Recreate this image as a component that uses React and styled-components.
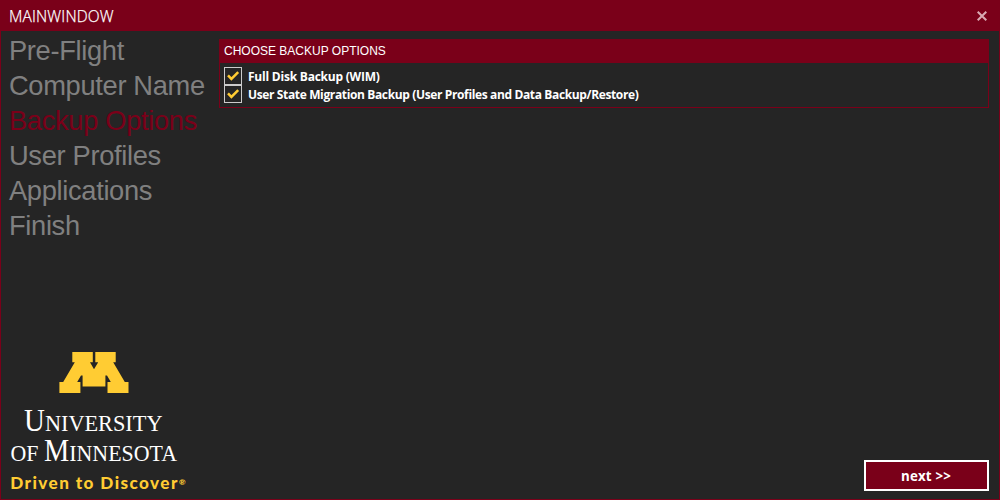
import React from 'react';
import styled, { createGlobalStyle } from 'styled-components';

const maroon = '#7a0019';
const gold = '#ffcc33';

const Global = createGlobalStyle`
  html, body { margin: 0; padding: 0; background: #252525; }
  *, *::before, *::after { box-sizing: border-box; }
`;

const Window = styled.div`
  width: 1000px;
  height: 500px;
  display: flex;
  flex-direction: column;
  background: #252525;
  border: 1px solid ${maroon};
  border-top: 0;
  color: #fff;
  overflow: hidden;
  font-family: 'Liberation Sans', Arial, sans-serif;
`;

const TitleBar = styled.header`
  height: 31px;
  flex: none;
  display: flex;
  align-items: center;
  justify-content: space-between;
  margin: 0 -1px;
  padding: 1px 13px 0 9px;
  background: ${maroon};
`;

const Title = styled.span`
  font: 300 15.5px/20px 'Open Sans', 'Noto Sans', sans-serif;
  letter-spacing: 0.15px;
  -webkit-text-stroke: 0.25px #fff;
`;

const CloseButton = styled.button`
  display: flex;
  padding: 0;
  border: 0;
  background: none;
`;

const Body = styled.div`
  flex: 1;
  min-height: 0;
  display: flex;
`;

const Sidebar = styled.aside`
  width: 218px;
  flex: none;
  display: flex;
  flex-direction: column;
  justify-content: space-between;
`;

const Nav = styled.nav`
  display: flex;
  flex-direction: column;
  padding: 2px 0 0 8px;
`;

const Step = styled.span`
  font-size: 27.3px;
  line-height: 35px;
  letter-spacing: -0.34px;
  white-space: nowrap;
  color: ${(p) => (p.$active ? maroon : '#808080')};
`;

const Logo = styled.svg`
  display: block;
  width: 200px;
  height: 160px;
  margin-left: -1px;
  margin-bottom: -1px;
`;

const Main = styled.main`
  flex: 1;
  display: flex;
  flex-direction: column;
  justify-content: space-between;
  padding: 8px 10px 8px 0;
`;

const Group = styled.section`
  height: 69px;
  border: 1px solid ${maroon};
`;

const GroupHeader = styled.h2`
  height: 23px;
  margin: 0;
  padding: 0 4px;
  background: ${maroon};
  font-size: 12px;
  font-weight: 400;
  line-height: 22px;
`;

const Options = styled.div`
  display: flex;
  flex-direction: column;
  padding: 4px 0 0 4px;
`;

const Option = styled.label`
  height: 18px;
  display: flex;
  align-items: center;
  gap: 6px;
`;

const Box = styled.span`
  width: 18px;
  height: 18px;
  flex: none;
  display: flex;
  border: 1px solid #ccc;
`;

const OptionText = styled.span`
  padding-top: 2px;
  font: 700 12px/18px 'Open Sans', 'Noto Sans', sans-serif;
  letter-spacing: ${(p) => p.$spacing}px;
  white-space: nowrap;
`;

const NextButton = styled.button`
  align-self: flex-end;
  width: 125px;
  height: 31px;
  padding: 1px 1px 0 0;
  border: 2px solid #fff;
  background: ${maroon};
  color: #fff;
  font: 700 13.33px/20px 'Open Sans', 'Noto Sans', sans-serif;
  letter-spacing: 0.15px;
`;

const steps = ['Pre-Flight', 'Computer Name', 'Backup Options', 'User Profiles', 'Applications', 'Finish'];

const options = [
  { label: 'Full Disk Backup (WIM)', spacing: -0.22 },
  { label: 'User State Migration Backup (User Profiles and Data Backup/Restore)', spacing: -0.365 },
];

function Check() {
  return (
    <svg width="16" height="16" viewBox="0 0 16 16">
      <path d="M3 7.4 L6.4 10.9 L13.2 4.1" fill="none" stroke={gold} strokeWidth="2.5" />
    </svg>
  );
}

function UniversityLogo() {
  return (
    <Logo viewBox="0 340 200 160">
      <path
        fill={gold}
        d="M72.3 352H92.8V362.3H90L94 369.3L98.2 362.3H95.3V352H115.7V362.3H113.2L124.8 382H128.5V393H107.5V382H110.8L107 375.5H105.4V386.5H82.6V375.5H81L77.2 382H80.4V393H59.4V382H63.2L74.8 362.3H72.3Z"
      />
      <g fill="#fff" fontFamily="'Liberation Serif', serif">
        <text x="24" y="430.500" fontSize="30.5" textLength="138.500" lengthAdjust="spacingAndGlyphs">
          U<tspan fontSize="23.5">NIVERSITY</tspan>
        </text>
        <text x="10.5" y="460.500" fontSize="23.5" textLength="166.500" lengthAdjust="spacingAndGlyphs">
          OF <tspan fontSize="30.5">M</tspan>INNESOTA
        </text>
      </g>
      <g fill={gold} fontFamily="Lato, sans-serif" fontWeight="900">
        <text x="10.300" y="489" fontSize="17" letterSpacing="1.4" textLength="168.500" lengthAdjust="spacingAndGlyphs">Driven to Discover</text>
        <text x="179" y="485" fontSize="8">®</text>
      </g>
    </Logo>
  );
}

export default function App() {
  return (
    <>
      <Global />
      <Window>
        <TitleBar>
          <Title>MAINWINDOW</Title>
          <CloseButton aria-label="Close">
            <svg width="10" height="10" viewBox="0 0 10 10">
              <path d="M0.7 0.7L9.3 9.3M9.3 0.7L0.7 9.3" stroke="#d9aab3" strokeWidth="2" />
            </svg>
          </CloseButton>
        </TitleBar>
        <Body>
          <Sidebar>
            <Nav>
              {steps.map((s) => (
                <Step key={s} $active={s === 'Backup Options'}>{s}</Step>
              ))}
            </Nav>
            <UniversityLogo />
          </Sidebar>
          <Main>
            <Group>
              <GroupHeader>CHOOSE BACKUP OPTIONS</GroupHeader>
              <Options>
                {options.map((o) => (
                  <Option key={o.label}>
                    <Box><Check /></Box>
                    <OptionText $spacing={o.spacing}>{o.label}</OptionText>
                  </Option>
                ))}
              </Options>
            </Group>
            <NextButton>next &gt;&gt;</NextButton>
          </Main>
        </Body>
      </Window>
    </>
  );
}
